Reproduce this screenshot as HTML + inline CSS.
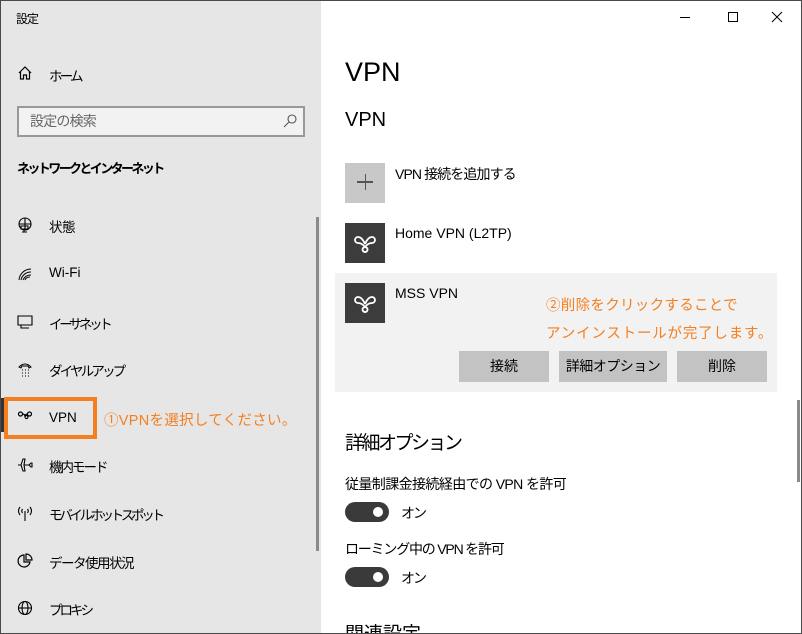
<!DOCTYPE html>
<html><head><meta charset="utf-8"><style>
*{margin:0;padding:0;box-sizing:border-box}
html,body{width:802px;height:634px;overflow:hidden}
body{font-family:"Liberation Sans","Noto Sans CJK JP",sans-serif;color:#000;position:relative;background:#fff}
.frame{position:absolute;left:0;top:0;width:802px;height:634px;border:1px solid #4a4a4a;pointer-events:none;z-index:10}
.left{position:absolute;left:0;top:0;width:321px;height:634px;background:#e6e6e6}
.a{position:absolute;white-space:nowrap}
.nav{font-size:13.5px;left:49px}
.ic{position:absolute;left:17px}
.org{color:#f47f20}
.btn{position:absolute;top:351px;height:31px;background:#c3c3c3;font-size:14px;text-align:center;line-height:31px}
.tile{position:absolute;left:345px;width:40px;height:40px}
.tog{position:absolute;left:345px;width:44px;height:20px;border-radius:10px;background:#3a3a3a}
.tog:after{content:"";position:absolute;right:6px;top:5px;width:10px;height:10px;border-radius:5px;background:#fff}
</style></head><body>
<div class="left"></div>
<div class="a" style="left:16px;top:10px;font-size:12px;letter-spacing:-1px">設定</div>
<svg class="ic" style="top:65px" width="16" height="16" viewBox="0 0 16 16" fill="none" stroke="#000" stroke-width="1.2"><path d="M2 8L8 2l6 6M3.5 7v7h3v-4h3v4h3V7"/></svg>
<div class="a nav" style="top:65px;letter-spacing:-2.8px">ホーム</div>
<div class="a" style="left:17px;top:106px;width:288px;height:31px;border:2px solid #999;background:#f2f2f2"></div>
<div class="a" style="left:30px;top:111px;font-size:14px;color:#666;letter-spacing:-0.8px">設定の検索</div>
<svg class="a" style="left:282px;top:113px" width="16" height="16" viewBox="0 0 16 16" fill="none" stroke="#555" stroke-width="1.1"><circle cx="10" cy="6" r="4"/><path d="M7 9l-5 5"/></svg>
<div class="a" style="left:17px;top:158px;font-size:13px;font-weight:bold;letter-spacing:-2.6px">ネットワークとインターネット</div>
<div class="a" style="left:316px;top:217px;width:3px;height:334px;background:#8a8a8a"></div>
<svg class="ic" style="top:217px" width="16" height="16" viewBox="0 0 16 16" fill="none" stroke="#000" stroke-width="1.1"><circle cx="8" cy="7" r="6"/><path d="M2 7h12M8 1v12M4 9h7v3H4zM7 12v3M5 15h5"/></svg>
<div class="a nav" style="top:216px;letter-spacing:-0.5px">状態</div>
<svg class="ic" style="top:266px" width="16" height="16" viewBox="0 0 16 16" fill="none" stroke="#000" stroke-width="1"><path d="M2 14A12 12 0 0 1 14 3M4 14A10 10 0 0 1 14 6M6 14A8 8 0 0 1 14 9M8 14A5 5 0 0 1 13 11"/></svg>
<div class="a nav" style="top:265px">Wi-Fi</div>
<svg class="ic" style="top:314px" width="16" height="16" viewBox="0 0 16 16" fill="none" stroke="#000" stroke-width="1.1"><path d="M1 2h14v9H1zM4 11v3h8"/></svg>
<div class="a nav" style="top:313px;letter-spacing:-3.4px">イーサネット</div>
<svg class="ic" style="top:361px" width="16" height="16" viewBox="0 0 16 16" fill="none" stroke="#000" stroke-width="1"><path d="M2 6Q8 0 14 6l-2 1-1-2H5L4 7z"/><path d="M5 9h1M8 9h1M11 9h1M5 12h1M8 12h1M11 12h1M5 15h1M8 15h1M11 15h1"/></svg>
<div class="a nav" style="top:360px;letter-spacing:-2.8px">ダイヤルアップ</div>
<div class="a" style="left:0;top:398px;width:4px;height:34px;background:#333"></div>
<div class="a" style="left:4px;top:397px;width:93px;height:42px;border:4px solid #f47f20"></div>
<svg class="ic" style="top:410px" width="16" height="12" viewBox="0 0 16 12" fill="none" stroke="#000" stroke-width="1.2"><circle cx="3.5" cy="4" r="2"/><circle cx="12.5" cy="4" r="2"/><path d="M5.5 4Q8 4 8 7Q8 4 10.5 4M8 7a1.5 1.5 0 1 1 0 .1"/></svg>
<div class="a nav" style="top:410px">VPN</div>
<div class="a org" style="left:104px;top:409px;font-size:14.5px;letter-spacing:0.3px">①VPNを選択してください。</div>
<svg class="ic" style="top:457px" width="16" height="16" viewBox="0 0 16 16" fill="none" stroke="#000" stroke-width="1.1"><path d="M1 8h3l2-6h2l-1 6h5l2-2h1v4h-1l-2-2H7l1 6H6L4 8"/></svg>
<div class="a nav" style="top:456px;letter-spacing:-2px">機内モード</div>
<svg class="ic" style="top:505px" width="16" height="16" viewBox="0 0 16 16" fill="none" stroke="#000" stroke-width="1.1"><path d="M8 6v10M3 2Q0 6 3 10M13 2q3 4 0 8M5.5 4q-1.5 2 0 4M10.5 4q1.5 2 0 4"/></svg>
<div class="a nav" style="top:504px;letter-spacing:-3.3px">モバイル ホットスポット</div>
<svg class="ic" style="top:553px" width="16" height="16" viewBox="0 0 16 16" fill="none" stroke="#000" stroke-width="1.2"><path d="M7 2a6 6 0 1 0 6 7H7zM9 1v6h6a6 6 0 0 0-6-6z"/></svg>
<div class="a nav" style="top:552px;letter-spacing:-1.5px">データ使用状況</div>
<svg class="ic" style="top:600px" width="16" height="16" viewBox="0 0 16 16" fill="none" stroke="#000" stroke-width="1.1"><circle cx="8" cy="8" r="6.5"/><ellipse cx="8" cy="8" rx="3" ry="6.5"/><path d="M1.5 8h13"/></svg>
<div class="a nav" style="top:599px;letter-spacing:-3px">プロキシ</div>

<svg class="a" style="left:680px;top:11px" width="110" height="12" viewBox="0 0 110 12" fill="none" stroke="#000" stroke-width="1"><path d="M0 6.5h10M48.5 1.5h9v9h-9zM92 1l10 10M102 1L92 11"/></svg>
<div class="a" style="left:345px;top:57px;font-size:27px">VPN</div>
<div class="a" style="left:345px;top:109px;font-size:20px">VPN</div>
<div class="tile" style="top:163px;background:#c8c8c8"></div>
<div class="a" style="left:357px;top:181px;width:16px;height:1.5px;background:#555"></div>
<div class="a" style="left:364.5px;top:174px;width:1.5px;height:16px;background:#555"></div>
<div class="a" style="left:395px;top:164px;font-size:14px;letter-spacing:-0.9px">VPN 接続を追加する</div>
<div class="tile" style="top:223px;background:#3c3c3c"></div>
<svg class="a" style="left:351px;top:233px" width="28" height="22" viewBox="0 0 28 22" fill="none" stroke="#fff" stroke-width="1.8"><path d="M14 11Q11 4 7 4a3 3 0 0 0 0 6Q11 10 14 14Q17 10 21 10a3 3 0 0 0 0-6Q17 4 14 11M14 14a2.5 2.5 0 1 0 .1 0"/></svg>
<div class="a" style="left:395px;top:225px;font-size:14px">Home VPN (L2TP)</div>
<div class="a" style="left:335px;top:273px;width:442px;height:119px;background:#f2f2f2"></div>
<div class="tile" style="top:283px;background:#3c3c3c"></div>
<svg class="a" style="left:351px;top:293px" width="28" height="22" viewBox="0 0 28 22" fill="none" stroke="#fff" stroke-width="1.8"><path d="M14 11Q11 4 7 4a3 3 0 0 0 0 6Q11 10 14 14Q17 10 21 10a3 3 0 0 0 0-6Q17 4 14 11M14 14a2.5 2.5 0 1 0 .1 0"/></svg>
<div class="a" style="left:395px;top:285px;font-size:14px">MSS VPN</div>
<div class="a org" style="left:546px;top:294px;font-size:14.5px;letter-spacing:0.3px">②削除をクリックすることで</div>
<div class="a org" style="left:546px;top:322px;font-size:14.5px;letter-spacing:0.8px">アンインストールが完了します。</div>
<div class="btn" style="left:459px;width:90px">接続</div>
<div class="btn" style="left:559px;width:108px;letter-spacing:-0.5px">詳細オプション</div>
<div class="btn" style="left:677px;width:90px">削除</div>
<div class="a" style="left:345px;top:428px;font-size:19px;letter-spacing:-2.5px">詳細オプション</div>
<div class="a" style="left:345px;top:474px;font-size:14px;letter-spacing:-0.6px">従量制課金接続経由での VPN を許可</div>
<div class="tog" style="top:502px"></div>
<div class="a" style="left:401px;top:503px;font-size:14px;letter-spacing:-2px">オン</div>
<div class="a" style="left:345px;top:539px;font-size:14px;letter-spacing:-1.2px">ローミング中の VPN を許可</div>
<div class="tog" style="top:567px"></div>
<div class="a" style="left:401px;top:568px;font-size:14px;letter-spacing:-2px">オン</div>
<div class="a" style="left:345px;top:619px;font-size:19px">関連設定</div>
<div class="a" style="left:797px;top:400px;width:3px;height:82px;background:#8a8a8a"></div>
<div class="frame"></div>
</body></html>
